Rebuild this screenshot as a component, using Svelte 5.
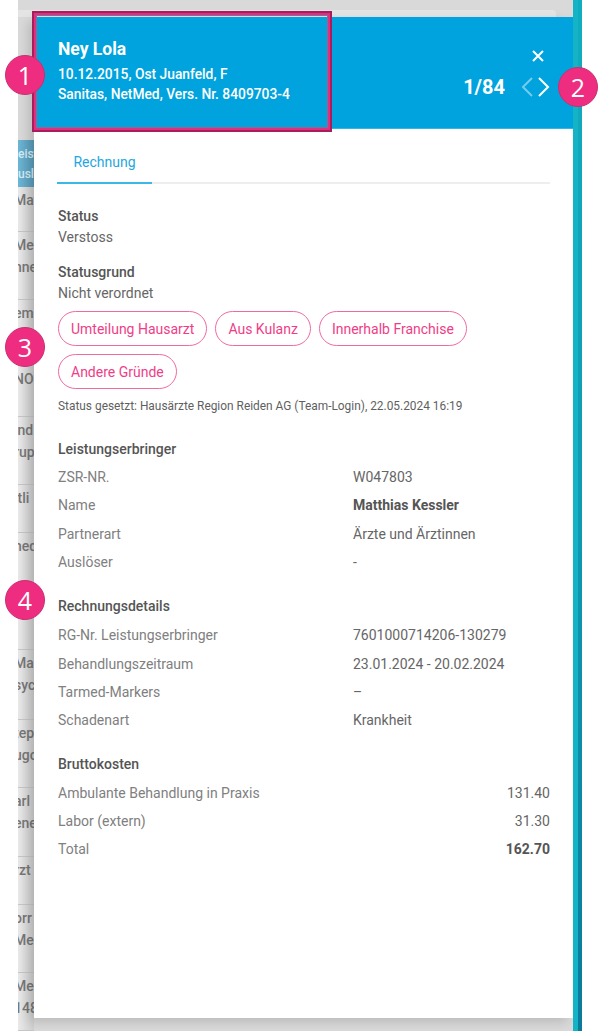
<script>
    const listRows = [
        { h: 45, lines: ["Mat"] },
        { h: 68, lines: ["Mec", "nne"] },
        { h: 117, lines: ["eme", "", "", "NOR"] },
        { h: 68, lines: ["ind", "rup"] },
        { h: 48, lines: ["itli"] },
        { h: 117, lines: ["hed", "", "", "syc"] },
        { h: 70, lines: ["Mar", "syc"] },
        { h: 68, lines: ["tep", "ugo"] },
        { h: 69, lines: ["arl", "ene"] },
        { h: 48, lines: ["rzt"] },
        { h: 68, lines: ["orr", "Mec"] },
        { h: 58, lines: ["Mec", "148"] }
    ];

    const chips = ["Umteilung Hausarzt", "Aus Kulanz", "Innerhalb Franchise", "Andere Gründe"];

    const provider = [
        { label: "ZSR-NR.", value: "W047803" },
        { label: "Name", value: "Matthias Kessler", strong: true },
        { label: "Partnerart", value: "Ärzte und Ärztinnen" },
        { label: "Auslöser", value: "-" }
    ];

    const details = [
        { label: "RG-Nr. Leistungserbringer", value: "7601000714206-130279" },
        { label: "Behandlungszeitraum", value: "23.01.2024 - 20.02.2024" },
        { label: "Tarmed-Markers", value: "–" },
        { label: "Schadenart", value: "Krankheit" }
    ];

    const costs = [
        { label: "Ambulante Behandlung in Praxis", value: "131.40" },
        { label: "Labor (extern)", value: "31.30" },
        { label: "Total", value: "162.70", strong: true }
    ];
</script>

<div class="page">
    <div class="gutter"></div>

    <div class="overlay">
        <div class="topband"><div class="topcard"></div></div>
        <div class="main">
            <div class="list">
                <div class="listhead"><span>eist</span><span>uslö</span></div>
                {#each listRows as row}
                    <div class="listrow" style="height: {row.h}px">
                        {#each row.lines as line}
                            <div class="listline">{line}</div>
                        {/each}
                    </div>
                {/each}
            </div>

            <div class="drawer">
                <header class="head">
                    <div class="patient">
                        <div class="name">Ney Lola</div>
                        <div class="sub">10.12.2015, Ost Juanfeld, F</div>
                        <div class="sub">Sanitas, NetMed, Vers. Nr. 8409703-4</div>
                    </div>
                    <div class="controls">
                        <svg class="close" width="12" height="12" viewBox="0 0 12 12">
                            <path d="M1 1 L11 11 M11 1 L1 11" />
                        </svg>
                        <div class="pager">
                            <span class="count">1/84</span>
                            <svg class="chev faded" width="12" height="20" viewBox="0 0 12 20">
                                <path d="M11 1 L2 10 L11 19" />
                            </svg>
                            <svg class="chev" width="12" height="20" viewBox="0 0 12 20">
                                <path d="M1 1 L10 10 L1 19" />
                            </svg>
                        </div>
                    </div>
                </header>

                <div class="body">
                    <div class="tabs">
                        <div class="tab">Rechnung</div>
                    </div>

                    <div class="field first">
                        <div class="title">Status</div>
                        <div class="text">Verstoss</div>
                    </div>
                    <div class="field second">
                        <div class="title">Statusgrund</div>
                        <div class="text">Nicht verordnet</div>
                    </div>

                    <div class="chips">
                        {#each chips as chip}
                            <button type="button" class="chip">{chip}</button>
                        {/each}
                    </div>
                    <div class="note">Status gesetzt: Hausärzte Region Reiden AG (Team-Login), 22.05.2024 16:19</div>

                    <section class="block provider">
                        <div class="title">Leistungserbringer</div>
                        {#each provider as row}
                            <div class="row">
                                <span class="label">{row.label}</span>
                                <span class="value" class:strong={row.strong}>{row.value}</span>
                            </div>
                        {/each}
                    </section>

                    <section class="block invoice">
                        <div class="title">Rechnungsdetails</div>
                        {#each details as row}
                            <div class="row">
                                <span class="label">{row.label}</span>
                                <span class="value">{row.value}</span>
                            </div>
                        {/each}
                    </section>

                    <section class="block">
                        <div class="title">Bruttokosten</div>
                        {#each costs as row}
                            <div class="row cost">
                                <span class="label">{row.label}</span>
                                <span class="value" class:strong={row.strong}>{row.value}</span>
                            </div>
                        {/each}
                    </section>
                </div>
            </div>
        </div>
    </div>

    <div class="strip"></div>

    <div class="highlight"></div>
    <div class="marker m1">1</div>
    <div class="marker m2">2</div>
    <div class="marker m3">3</div>
    <div class="marker m4">4</div>
</div>

<style>
    :global(body) {
        margin: 0;
        background: #fff;
    }

    .page {
        position: relative;
        display: flex;
        width: 604px;
        height: 1031px;
        overflow: hidden;
        font-family: Roboto, "Liberation Sans", sans-serif;
        background: #fff;
    }

    .gutter {
        width: 18px;
        flex: none;
    }

    .strip {
        width: 9px;
        flex: none;
        background:
            linear-gradient(to right, #14b4c6 0, #14b4c6 50%, transparent 50%),
            linear-gradient(to bottom, #10adc0 0, #0f9ab4 50%, #0a7a9b 100%);
    }

    .overlay {
        width: 555px;
        flex: none;
        background: #d9d9d9;
        display: flex;
        flex-direction: column;
    }

    .topband {
        height: 17px;
        padding-top: 10px;
        padding-right: 17px;
        box-sizing: border-box;
    }

    .topcard {
        height: 7px;
        background: #e4e4e4;
        border-top-right-radius: 4px;
    }

    .main {
        display: flex;
        align-items: flex-start;
    }

    .list {
        width: 16px;
        flex: none;
        overflow: hidden;
        margin-top: 123px;
        color: #777;
        font-size: 14px;
        font-weight: 500;
        background: linear-gradient(to right, #e9e9e9, #cfcfcf);
    }

    .listhead {
        height: 47px;
        background: linear-gradient(to right, #6db6d6, #5a9dba);
        color: #d8edf6;
        font-size: 12px;
        display: flex;
        flex-direction: column;
        justify-content: center;
        line-height: 20px;
    }

    .listrow {
        box-sizing: border-box;
        border-bottom: 1px solid #c6c6c6;
        padding-top: 2px;
    }

    .listline {
        height: 22px;
        line-height: 22px;
        margin-left: -4px;
        white-space: nowrap;
    }

    .drawer {
        width: 539px;
        height: 1001px;
        flex: none;
        background: #fff;
        box-shadow: -6px 4px 10px rgba(0, 0, 0, 0.14);
    }

    .head {
        height: 112px;
        box-sizing: border-box;
        background: #00a3de;
        border-bottom: 1px solid #35b4e6;
        color: #fff;
        display: flex;
        justify-content: space-between;
        padding: 21px 23px 0 24px;
    }

    .name {
        font-size: 17.5px;
        font-weight: 700;
        line-height: 22px;
        margin-bottom: 4px;
    }

    .sub {
        font-size: 13.8px;
        font-weight: 500;
        line-height: 20px;
    }

    .controls {
        display: flex;
        flex-direction: column;
        align-items: flex-end;
    }

    .close {
        margin: 12px 6px 0 0;
    }

    .close path,
    .chev path {
        fill: none;
        stroke: #fff;
        stroke-width: 2;
    }

    .pager {
        display: flex;
        align-items: center;
        margin-top: 13px;
    }

    .count {
        font-size: 20px;
        font-weight: 700;
        line-height: 24px;
        margin-right: 16px;
    }

    .chev {
        margin-left: 5px;
    }

    .chev.faded {
        opacity: 0.45;
        margin-left: 0;
    }

    .body {
        padding: 0 23px 0 24px;
        color: #666;
        font-size: 14px;
    }

    .tabs {
        height: 55px;
        box-sizing: border-box;
        border-bottom: 2px solid #eeeeee;
        display: flex;
        margin-left: -1px;
    }

    .tab {
        width: 95px;
        height: 55px;
        box-sizing: border-box;
        border-bottom: 2px solid #3cb8e8;
        color: #1ea8de;
        text-align: center;
        font-size: 14px;
        font-weight: 400;
        line-height: 66px;
    }

    .title {
        font-weight: 500;
        color: #555;
        line-height: 20px;
    }

    .text {
        color: #666;
        line-height: 20px;
        margin-top: 1px;
    }

    .field.first {
        margin-top: 22px;
    }

    .field.second {
        margin-top: 15px;
    }

    .chips {
        display: flex;
        flex-wrap: wrap;
        gap: 8px;
        margin-top: 8px;
    }

    .chip {
        height: 35px;
        padding: 0 12px;
        border: 1px solid #f06aa2;
        border-radius: 18px;
        background: #fff;
        color: #ef3d88;
        font-family: inherit;
        font-size: 14px;
    }

    .note {
        font-size: 11.9px;
        line-height: 16px;
        margin-top: 9px;
        color: #5f5f5f;
    }

    .block {
        margin-top: 20px;
    }

    .block.provider {
        margin-top: 25px;
    }

    .row {
        display: flex;
        align-items: center;
        height: 28.3px;
    }

    .title + .row {
        margin-top: 4px;
    }

    .invoice .title + .row {
        margin-top: 5px;
    }

    .label {
        width: 295px;
        flex: none;
        color: #808080;
    }

    .value {
        color: #666;
    }

    .value.strong {
        font-weight: 700;
        color: #555;
    }

    .cost {
        justify-content: space-between;
    }

    .highlight {
        position: absolute;
        left: 32px;
        top: 11px;
        width: 296px;
        height: 117px;
        border: 2px solid #a81d5e;
        box-shadow: inset 0 0 0 2px #e0307d, inset 0 0 0 3px #8a6a96;
    }

    .marker {
        position: absolute;
        width: 40px;
        height: 40px;
        box-sizing: border-box;
        border: 1px solid #c7306f;
        border-radius: 50%;
        background: #ef2d80;
        color: #fff;
        font-family: "Open Sans", sans-serif;
        font-size: 25px;
        line-height: 38px;
        text-align: center;
    }

    .m1 { left: 5px; top: 55px; }
    .m2 { left: 558px; top: 67px; }
    .m3 { left: 5px; top: 327px; }
    .m4 { left: 5px; top: 580px; }
</style>
